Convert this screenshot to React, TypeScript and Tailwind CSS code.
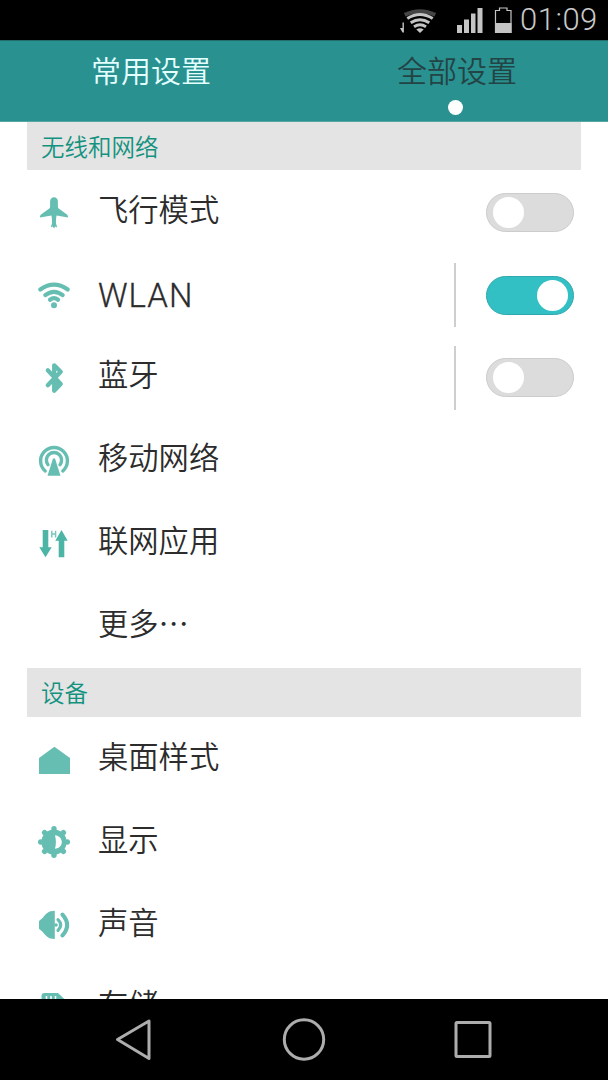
import type { ReactNode } from 'react';

const TEAL = '#66beb2';

function Icon({ children }: { children?: ReactNode }) {
  return (
    <svg width="36" height="36" viewBox="0 0 36 36" fill={TEAL} className="shrink-0">
      {children}
    </svg>
  );
}

const PlaneIcon = () => (
  <Icon>
    <path d="M18 3.2C20.3 3.2 21.9 5 21.9 7.4V12.4C21.9 13.6 22.3 14.3 23.4 15.1L30.6 20.3C31.6 21.1 32 21.9 32 23.4L20.6 21.6C20 24.5 19.900 27 20 29.600L21.300 33.400L19.200 32.600L18 34.600L16.800 32.600L14.700 33.400L16 29.600C16.100 27 16 24.500 15.400 21.600L4 23.400C4 21.900 4.400 21.100 5.400 20.300L12.600 15.100C13.700 14.300 14.100 13.600 14.100 12.400V7.400C14.100 5 15.700 3.200 18 3.200Z" />
  </Icon>
);

const WifiIcon = () => (
  <Icon>
    <g fill="none" stroke={TEAL} strokeWidth="4.200" strokeLinecap="round">
      <path d="M4.300 12.500Q18 2.900 31.700 12.500" />
      <path d="M9.300 18.100Q18 11.500 26.700 18.100" />
      <path d="M14 22.700Q18 19.700 22 22.700" />
    </g>
    <circle cx="18" cy="28.300" r="3" />
  </Icon>
);

const BluetoothIcon = () => (
  <Icon>
    <path d="M11.800 10.300L24.700 24L18.200 30.700V5.300L24.700 11.800L11.800 25.300" fill="none" stroke={TEAL} strokeWidth="4.300" strokeLinecap="round" strokeLinejoin="round" />
    <path d="M18 14h4v14h-4z" />
  </Icon>
);

const CellIcon = () => (
  <Icon>
    <g fill="none" stroke={TEAL} strokeWidth="3.400" strokeLinecap="round">
      <path d="M9.200 29A13.400 13.400 0 1 1 26.800 29" />
      <path d="M12 22.700A7.600 7.600 0 1 1 24 22.700" />
    </g>
    <path d="M17 16.500h2L24.500 33.800h-13z" />
  </Icon>
);

const DataIcon = () => (
  <Icon>
    <g fill="#4cb5a5">
      <path d="M6.700 5h5.600v17.300h3.400L9.500 32.200 3.300 22.300h3.400z" />
      <path d="M22.700 32.200h5.600V15.700h3.400L25.500 5 19.300 15.700h3.400z" />
    </g>
    <path d="M15.800 5.700v6.800M19.600 5.700v6.800M15.800 9h3.800" fill="none" stroke="#77c6bb" strokeWidth="1.400" />
  </Icon>
);

const HomeIcon = () => (
  <Icon>
    <path d="M18.400 4.800L34 16v16H3V16z" />
  </Icon>
);

const DisplayIcon = () => (
  <Icon>
    <circle cx="18" cy="18" r="12.600" />
    {[0, 45, 90, 135, 180, 225, 270, 315].map((a) => (
      <circle key={a} cx="18" cy="4.700" r="2.700" transform={`rotate(${a} 18 18)`} />
    ))}
    <path d="M19 11.200c4.200.4 6.800 3.200 6.800 6.800s-2.600 6.400-6.800 6.800c1.200-4.500 1.200-9 0-13.600z" fill="white" />
  </Icon>
);

const SoundIcon = () => (
  <Icon>
    <path d="M18.800 3.700v28.400c-6 0-9-2.800-12-7L3 21.800v-7.800L6.800 10.700c3-4.200 6-7 12-7z" />
    <circle cx="20" cy="18" r="1.800" />
    <g fill="none" stroke={TEAL} strokeLinecap="round">
      <path d="M22 12.700Q27.400 18 22 23.300" strokeWidth="3.200" />
      <path d="M26.500 7.600Q35.800 18 26.500 28.400" strokeWidth="4" />
    </g>
  </Icon>
);

const StorageIcon = () => (
  <Icon>
    <path d="M8.500 3H22l6.300 6v20a3 3 0 0 1-3 3H8.500a3 3 0 0 1-3-3V6a3 3 0 0 1 3-3z" />
    <path d="M10.500 6v4M15 6v4M19.500 6v4" stroke="white" strokeWidth="1.500" />
  </Icon>
);

function Switch({ on = false }: { on?: boolean }) {
  return (
    <div
      className={
        'flex h-[39px] w-[88px] items-center rounded-full border px-[5.500px] ' +
        (on ? 'justify-end border-[#2fa9ad] bg-[#32c0c5]' : 'justify-start border-[#cccccc] bg-[#dcdcdc]')
      }
    >
      <div className="size-[31px] rounded-full bg-white" />
    </div>
  );
}

function Row({ icon, label, on, divider }: { icon?: ReactNode; label: string; on?: boolean; divider?: boolean }) {
  const latin = label === 'WLAN';
  return (
    <div className="flex h-[82.700px] shrink-0 items-center pr-[34px] pl-9">
      {icon ?? <div className="w-9" />}
      <div
        className={
          'ml-[26px] flex-1 whitespace-nowrap text-[#2c2c2c] ' +
          (latin
            ? "pt-[1px] font-['Roboto',sans-serif] text-[33px] leading-10 font-light tracking-[1px] [-webkit-text-stroke:0.300px_#2c2c2c]"
            : "pb-[8.500px] font-['Noto_Sans_CJK_SC',sans-serif] text-[30.300px] leading-10 font-[350]")
        }
      >
        {label}
      </div>
      {divider && <div className="mr-[30px] h-16 w-[2px] bg-[#cecece]" />}
      {on !== undefined && <Switch on={on} />}
    </div>
  );
}

function SectionTitle({ children }: { children: ReactNode }) {
  return (
    <div className="mx-[27px] flex h-[49px] shrink-0 items-center bg-[#e4e4e4] pl-3.5 font-['Noto_Sans_CJK_SC',sans-serif] text-[23.500px] font-[350] text-[#13927f]">
      {children}
    </div>
  );
}

function StatusBar() {
  return (
    <div className="flex h-10 shrink-0 items-center justify-end bg-black">
      <svg width="118" height="40" viewBox="396 0 118 40" fill="#c4c4c4">
        <path d="M402.500 22.500h1.400v10h-1.400zM400 28h2.500v4.500z" />
        <g fill="none" stroke="#c4c4c4" strokeWidth="3">
          <path d="M404.700 14.800Q420 7.500 435.300 14.800" stroke="#454545" strokeWidth="4" />
          <path d="M407.300 18.500Q420 10.500 432.700 18.500" />
          <path d="M410.700 22.700Q420 16.600 429.300 22.700" />
          <path d="M414 26.700Q420 22.900 426 26.700" />
        </g>
        <path d="M416.300 29.500q3.700-2.400 7.400 0L420 33z" />
        <path d="M457 25h5v8h-5zM464 19.500h5V33h-5zM471 13.500h4.500V33H471zM477.500 8h5v25h-5z" />
        <path d="M495.500 32.500v-22h4v-2.500h7.500v2.500h4v22z" fill="none" stroke="#c4c4c4" strokeWidth="1.200" />
        <path d="M495 23h16.500v10H495z" />
      </svg>
      <div className="w-[94px] pl-1.5 font-['Roboto',sans-serif] text-[31px] leading-10 font-light tracking-[0.500px] text-[#c8c8c8]">01:09</div>
    </div>
  );
}

export default function App() {
  return (
    <div className="flex h-[1080px] w-[608px] flex-col overflow-hidden bg-white">
      <StatusBar />
      <div className="grid h-[82px] shrink-0 grid-cols-2 border-t border-b border-t-[#206d6c] border-b-[#56a6a3] bg-[#2a9191] text-center font-['Noto_Sans_CJK_SC',sans-serif] text-[30px] leading-[56px] font-[350]">
        <div className="pr-0.5 text-[#e3ffff]">常用设置</div>
        <div className="flex flex-col items-center text-[#234444]">
          <span className="pl-0.5">全部设置</span>
          <span className="mt-[3px] mr-px size-[15px] rounded-full bg-white" />
        </div>
      </div>
      <div className="flex min-h-0 flex-1 flex-col overflow-hidden">
        <div className="mb-px flex h-12 shrink-0 flex-col overflow-hidden">
          <SectionTitle>无线和网络</SectionTitle>
        </div>
        <Row icon={<PlaneIcon />} label="飞行模式" on={false} />
        <Row icon={<WifiIcon />} label="WLAN" on divider />
        <Row icon={<BluetoothIcon />} label="蓝牙" on={false} divider />
        <Row icon={<CellIcon />} label="移动网络" />
        <Row icon={<DataIcon />} label="联网应用" />
        <Row label="更多⋯" />
        <div className="mt-[0.800px] mb-[1.400px] flex shrink-0 flex-col">
          <SectionTitle>设备</SectionTitle>
        </div>
        <Row icon={<HomeIcon />} label="桌面样式" />
        <Row icon={<DisplayIcon />} label="显示" />
        <Row icon={<SoundIcon />} label="声音" />
        <Row icon={<StorageIcon />} label="存储" />
      </div>
      <div className="flex h-[81px] shrink-0 items-end bg-black pl-[90px]">
        <svg width="420" height="80" viewBox="90 1000 420 80" fill="none" stroke="#adadad" strokeWidth="3" strokeLinejoin="round">
          <path d="M117.500 1039.500L149 1021v37.500z" />
          <circle cx="304" cy="1039.500" r="19.700" />
          <rect x="456" y="1022.500" width="34" height="34" rx="1" />
        </svg>
      </div>
    </div>
  );
}
